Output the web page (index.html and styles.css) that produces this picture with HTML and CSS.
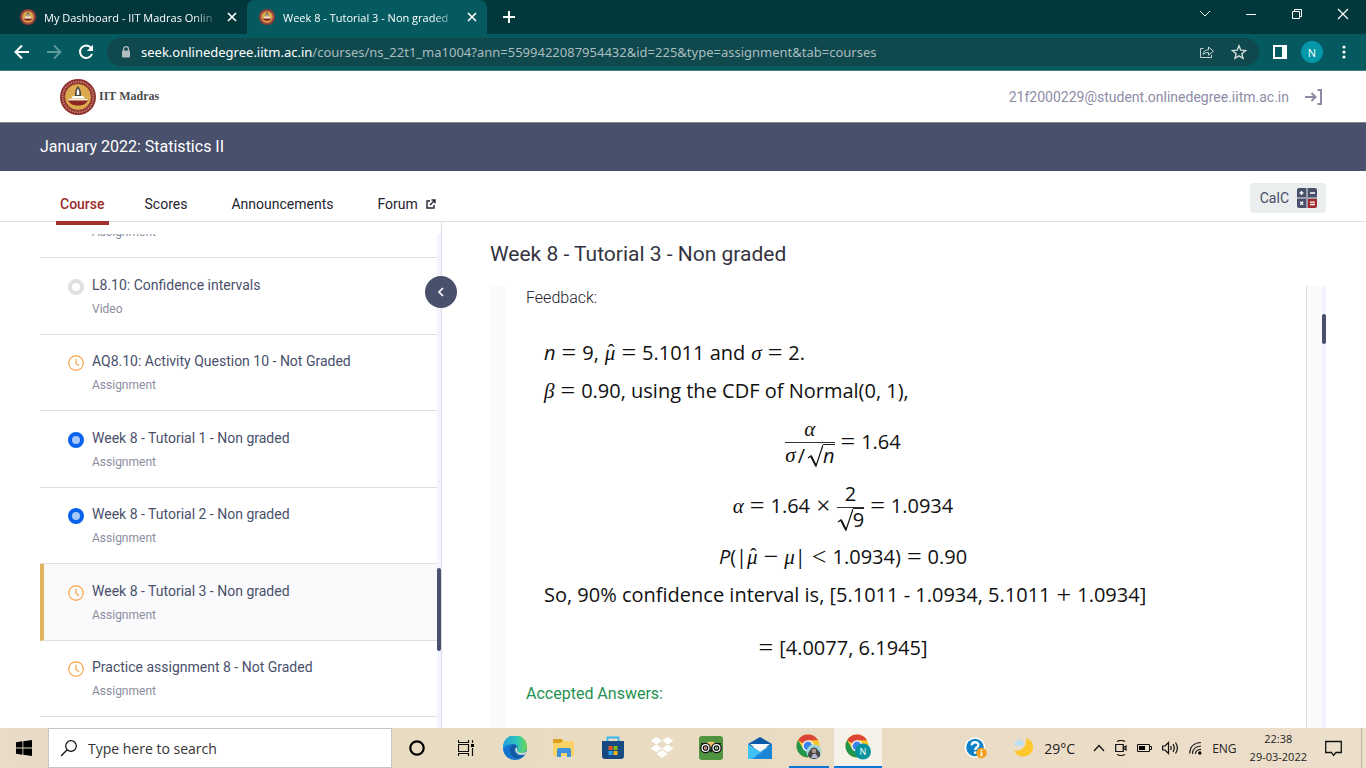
FILE: index.html
```html
<!DOCTYPE html>
<html lang="en">
<head>
<meta charset="utf-8">
<title>Week 8 - Tutorial 3 - Non graded</title>
<link rel="stylesheet" href="styles.css">
</head>
<body>
<svg class="defs" aria-hidden="true">
  <symbol id="seal" viewBox="0 0 36 36">
    <circle cx="18" cy="18" r="18" fill="#8f2f2c"/>
    <circle cx="18" cy="18" r="15.400" fill="none" stroke="#c98a80" stroke-width="1.800" stroke-dasharray="1.3 1.1"/>
    <circle cx="18" cy="18" r="13.400" fill="#dba94e" stroke="#8f2f2c" stroke-width=".8"/>
    <path d="M18 7c-2.600 3-3.400 6-3 10h6c.4-4-.4-7-3-10z" fill="#4a4742"/>
    <path d="M18 9.500c-1.200 2-1.500 4-1.200 6.500h2.400c.3-2.500 0-4.500-1.200-6.500z" fill="#fff"/>
    <path d="M11 19.500h14l-2-2.500H13z" fill="#fff"/>
    <path d="M7.500 20h21c-1.500 4.500-5 6.500-10.500 6.500S9 24.500 7.500 20z" fill="#8c2623"/>
    <path d="M7.500 20h21l-1 1.500h-19z" fill="#f5e7d0"/>
  </symbol>
  <symbol id="clock" viewBox="0 0 16 16">
    <circle cx="8" cy="8" r="7.300" fill="none" stroke="#f8ac55" stroke-width="1.400"/>
    <path d="M8 3.800V8.500L11 10.600" fill="none" stroke="#f8ac55" stroke-width="1.300"/>
  </symbol>
  <symbol id="cross" viewBox="0 0 10 10">
    <path d="M1 1l8 8M9 1L1 9" stroke="#fff" stroke-width="1.700"/>
  </symbol>
  <symbol id="chrome" viewBox="0 0 24 24">
    <circle cx="12" cy="12" r="11.500" fill="#f7c52c"/>
    <path d="M12 12L2 6.300A11.500 11.500 0 0 1 22 6.300H12z" fill="#dc4437"/>
    <path d="M2 6.300A11.500 11.500 0 0 0 11.500 23.500L16.700 14.500 12 12 7 14.500z" fill="#22954f"/>
    <circle cx="12" cy="12" r="5.700" fill="#fff"/>
    <circle cx="12" cy="12" r="4.400" fill="#3e82ee"/>
  </symbol>
  <symbol id="root" viewBox="0 0 16 24">
    <path d="M1 14l3-2 5 10L16 1" fill="none" stroke="#111" stroke-width="1.200"/>
    <path d="M4 12l5 10" stroke="#111" stroke-width="1.800"/>
  </symbol>
</svg>

<header class="browser">
  <div class="tabstrip">
    <div class="tab">
      <svg class="favicon"><use href="#seal"/></svg>
      <span class="tab-title">My Dashboard - IIT Madras Onlin</span>
      <button class="tab-close" aria-label="Close tab"><svg width="10" height="10"><use href="#cross"/></svg></button>
    </div>
    <div class="tab tab-active">
      <svg class="favicon"><use href="#seal"/></svg>
      <span class="tab-title">Week 8 - Tutorial 3 - Non graded</span>
      <button class="tab-close" aria-label="Close tab"><svg width="10" height="10"><use href="#cross"/></svg></button>
    </div>
    <button class="new-tab" aria-label="New tab"><svg width="12" height="12" viewBox="0 0 12 12"><path d="M6 0v12M0 6h12" stroke="#fff" stroke-width="2"/></svg></button>
    <div class="window-buttons">
      <button aria-label="Search tabs"><svg width="12" height="12" viewBox="0 0 12 12"><path d="M1 3l5 5 5-5" fill="none" stroke="#dfe" /></svg></button>
      <button aria-label="Minimize"><svg width="12" height="12" viewBox="0 0 12 12"><path d="M1 6.500h10" stroke="#fff"/></svg></button>
      <button aria-label="Restore"><svg width="12" height="12" viewBox="0 0 12 12"><path d="M1.500 3.500h7v7h-7zM3.500 3V1.500h7v7H9" fill="none" stroke="#fff"/></svg></button>
      <button aria-label="Close"><svg width="12" height="12" viewBox="0 0 12 12"><path d="M1 1l10 10M11 1L1 11" stroke="#fff" stroke-width="1.200"/></svg></button>
    </div>
  </div>
  <div class="toolbar">
    <div class="tool-group">
      <button class="tool" aria-label="Back"><svg width="16" height="16" viewBox="0 0 16 16"><path d="M15 8H2M8 1.500L1.500 8 8 14.500" fill="none" stroke="#fff" stroke-width="2"/></svg></button>
      <button class="tool" aria-label="Forward"><svg width="16" height="16" viewBox="0 0 16 16"><path d="M1 8h13M8 1.500L14.500 8 8 14.500" fill="none" stroke="#5f999c" stroke-width="1.800"/></svg></button>
      <button class="tool" aria-label="Reload"><svg width="16" height="16" viewBox="0 0 16 16"><path d="M13 3.800A6.200 6.200 0 1 0 14 10" fill="none" stroke="#fff" stroke-width="2"/><path d="M15 .8V7H8.800z" fill="#fff"/></svg></button>
    </div>
    <div class="omnibox">
      <svg width="10" height="12" viewBox="0 0 10 12"><rect x="1" y="4.500" width="8" height="7" rx="1" fill="#b4bec2"/><path d="M2.500 5V3.200a2.500 2.500 0 0 1 5 0V5" fill="none" stroke="#b4bec2" stroke-width="1.300"/></svg>
      <div class="url" role="textbox" aria-label="Address"><span class="url-host">seek.onlinedegree.iitm.ac.in</span>/courses/ns_22t1_ma1004?ann=5599422087954432&amp;id=225&amp;type=assignment&amp;tab=courses</div>
      <div class="tool-group">
        <button class="tool" aria-label="Share"><svg width="16" height="16" viewBox="0 0 16 16"><path d="M4.500 4.500h-3v9h11v-2.500M4 10.500c.6-3.400 2.500-4.700 5.500-4.700V3l5 4.200-5 4V8.600c-2.500 0-4 .4-5.500 1.900z" fill="none" stroke="#c4d2d3"/></svg></button>
        <button class="tool" aria-label="Bookmark"><svg width="16" height="16" viewBox="0 0 16 16"><path d="M8 1.800l1.800 4.400 4.700.4-3.600 3.100 1.100 4.600L8 11.900l-4 2.400 1.100-4.600L1.500 6.600l4.700-.4z" fill="none" stroke="#d3dddd" stroke-width="1.400"/></svg></button>
      </div>
    </div>
    <button class="tool" aria-label="Side panel"><svg width="14" height="14" viewBox="0 0 14 14"><path d="M0 0h14v14H0zM2 2v10h7V2z" fill="#fff" fill-rule="evenodd"/></svg></button>
    <button class="profile" aria-label="Profile">N</button>
    <button class="tool" aria-label="Menu"><svg width="4" height="14" viewBox="0 0 4 14" fill="#fff"><circle cx="2" cy="2" r="1.600"/><circle cx="2" cy="7" r="1.600"/><circle cx="2" cy="12" r="1.600"/></svg></button>
  </div>
</header>

<div class="site-header">
  <a class="brand" href="#"><svg class="brand-seal"><use href="#seal"/></svg>IIT Madras</a>
  <div class="account">
    <span>21f2000229@student.onlinedegree.iitm.ac.in</span>
    <button aria-label="Log out"><svg width="18" height="16" viewBox="0 0 18 16"><path d="M0 8h10M6.500 4l4 4-4 4M12.500 1H16v14h-3.500" fill="none" stroke="#8d8ca6" stroke-width="2"/></svg></button>
  </div>
</div>

<div class="course-banner">January 2022: Statistics II</div>

<nav class="course-nav">
  <a class="nav-link nav-current" href="#">Course</a>
  <a class="nav-link" href="#">Scores</a>
  <a class="nav-link" href="#">Announcements</a>
  <a class="nav-link" href="#">Forum
    <svg width="10" height="10" viewBox="0 0 10 10"><path d="M4 2H1v7h7V6M4 6l4.500-4.500M5.500 1H9v3.500" fill="none" stroke="#25242f" stroke-width="1.400"/></svg></a>
  <button class="calc">CalC
    <svg width="20" height="20" viewBox="0 0 20 20"><path d="M2 0h7v9H0V2a2 2 0 0 1 2-2zM11 0h7a2 2 0 0 1 2 2v7h-9zM0 11h9v9H2a2 2 0 0 1-2-2z" fill="#49506b"/><path d="M9 0h2v20H9zM0 9h20v2H0z" fill="#9a9dac"/><path d="M11 11h9v7a2 2 0 0 1-2 2h-7z" fill="#a32a2a"/><path d="M2.500 5h4M4.500 3v4M13 5h5M13 14.200h5M13 16.500h5M3.200 13.700l3 3M6.200 13.700l-3 3" stroke="#fff" stroke-width="1.300"/></svg>
  </button>
</nav>

<div class="workspace">
  <aside class="sidebar">
    <div class="sidebar-scroll">
      <ul class="lessons">
        <li class="lesson lesson-cut"><span class="lesson-kind">Assignment</span></li>
        <li class="lesson"><span class="status status-empty"></span><a href="#">L8.10: Confidence intervals</a><span class="lesson-kind">Video</span></li>
        <li class="lesson"><svg class="status"><use href="#clock"/></svg><a href="#">AQ8.10: Activity Question 10 - Not Graded</a><span class="lesson-kind">Assignment</span></li>
        <li class="lesson"><span class="status status-done"></span><a href="#">Week 8 - Tutorial 1 - Non graded</a><span class="lesson-kind">Assignment</span></li>
        <li class="lesson"><span class="status status-done"></span><a href="#">Week 8 - Tutorial 2 - Non graded</a><span class="lesson-kind">Assignment</span></li>
        <li class="lesson lesson-current"><svg class="status"><use href="#clock"/></svg><a href="#">Week 8 - Tutorial 3 - Non graded</a><span class="lesson-kind">Assignment</span></li>
        <li class="lesson"><svg class="status"><use href="#clock"/></svg><a href="#">Practice assignment 8 - Not Graded</a><span class="lesson-kind">Assignment</span></li>
      </ul>
      <div class="track"><div class="thumb thumb-list"></div></div>
    </div>
    <button class="collapse" aria-label="Collapse sidebar"><svg width="8" height="10" viewBox="0 0 8 10"><path d="M6 1L2 5l4 4" fill="none" stroke="#fff" stroke-width="1.700"/></svg></button>
  </aside>

  <main class="content">
    <h1>Week 8 - Tutorial 3 - Non graded</h1>
    <div class="sheet-frame">
      <div class="sheet">
        <p class="label">Feedback:</p>
        <div class="solution">
          <p class="line"><i>n</i><b>=</b><span>9,</span><span><span class="hat"><em>μ</em></span></span><b>=</b><span>5.1011 and</span><em>σ</em><b>=</b><span>2.</span></p>
          <p class="line"><em>β</em><b>=</b><span>0.90, using the CDF of Normal(0, 1),</span></p>
          <p class="line centered tall">
            <span class="frac"><span class="num"><em>α</em></span><span class="den"><em>σ</em><span class="slash">/</span><svg class="root"><use href="#root"/></svg><span class="radicand"><i>n</i></span></span></span><b>=</b><span>1.64</span></p>
          <p class="line centered tall"><em>α</em><b>=</b><span>1.64</span><b>×</b>
            <span class="frac"><span class="num">2</span><span class="den"><svg class="root"><use href="#root"/></svg><span class="radicand">9</span></span></span><b>=</b><span>1.0934</span></p>
          <p class="line centered"><span><i>P</i>(|<span class="hat"><em>μ</em></span></span><b>−</b><span><em>μ</em>|</span><b>&lt;</b><span>1.0934)</span><b>=</b><span>0.90</span></p>
          <p class="line"><span>So, 90% confidence interval is, [5.1011 - 1.0934, 5.1011</span><b>+</b><span>1.0934]</span></p>
          <p class="line centered result"><b>=</b><span>[4.0077, 6.1945]</span></p>
        </div>
        <p class="label accepted">Accepted Answers:</p>
      </div>
      <div class="track"><div class="thumb thumb-sheet"></div></div>
    </div>
  </main>
</div>

<footer class="taskbar">
  <button class="task start" aria-label="Start"><svg width="16" height="16" viewBox="0 0 16 16"><path d="M0 2.200L6.500 1.300v6.200H0zM7.300 1.200L16 0v7.500H7.300zM0 8.400h6.500v6.300L0 13.800zM7.300 8.400H16V16l-8.700-1.200z"/></svg></button>
  <label class="search"><svg width="18" height="18" viewBox="0 0 18 18"><circle cx="11" cy="7" r="5.300" fill="none" stroke="#111" stroke-width="1.200"/><path d="M7.200 10.800L1 17" stroke="#111" stroke-width="1.300"/></svg><input type="text" placeholder="Type here to search" aria-label="Search"></label>
  <button class="task" aria-label="Cortana"><svg width="16" height="16" viewBox="0 0 16 16"><circle cx="8" cy="8" r="6.700" fill="none" stroke="#000" stroke-width="2.200"/></svg></button>
  <button class="task" aria-label="Task view"><svg width="16" height="16" viewBox="0 0 16 16"><path d="M.5 0v2.500h10V0M.5 16v-2.500h10V16M.5 4.500h10v7H.5zM14.500 0v3M14.500 8v8" fill="none" stroke="#111" stroke-width="1.200"/><path d="M13 4h3v3h-3z"/></svg></button>
  <button class="task" aria-label="Edge"><svg width="24" height="24" viewBox="0 0 24 24"><defs><linearGradient id="edge-top"><stop offset="0" stop-color="#249ee2"/><stop offset=".6" stop-color="#31c7b6"/><stop offset="1" stop-color="#6cd84d"/></linearGradient></defs><circle cx="12" cy="12" r="12" fill="#1477cf"/><path d="M0 11A12 12 0 0 1 24 11c0 4-3 6-6.500 6-3 0-4-1.300-3-3 1.400-2.500-.5-6-4.500-6C6 8 2 9.500 0 13z" fill="url(#edge-top)"/><path d="M10 8.500c-4 2-4.500 9 .5 12.500 3.500 2.200 8 1.500 11-2-4 1.800-10 .5-10-5 0-2 1-2.800 2-3.500-1-1.300-2-2-3.500-2z" fill="#1558a5"/><path d="M13.800 11c-1.500 1-2 3-.8 5 2 3 6 3.500 9 2.200l1.800-3c-3 2.300-8 2.300-9.300.3-.8-1.500.3-2.500-.7-4.500z" fill="#e9dfc6"/></svg></button>
  <button class="task" aria-label="File Explorer"><svg width="22" height="20" viewBox="0 0 22 20"><path d="M0 1h9l2 2h10v15H0z" fill="#f9d368"/><path d="M0 1h9l1 2-2 2H0z" fill="#dda020"/><path d="M4 19v-7q0-2 2-2h10q2 0 2 2v7h-4v-4H8v4z" fill="#3e91dd"/></svg></button>
  <button class="task" aria-label="Store"><svg width="24" height="24" viewBox="0 0 24 24"><path d="M6.500 6V1.500h11V6" fill="none" stroke="#36b6ee" stroke-width="1.800"/><path d="M1 5h22v15a3 3 0 0 1-3 3H4a3 3 0 0 1-3-3z" fill="#174a82"/><path d="M7.500 10h4v4h-4z" fill="#ef5323"/><path d="M12.500 10h4v4h-4z" fill="#7fba00"/><path d="M7.500 15h4v4h-4z" fill="#22a6ee"/><path d="M12.500 15h4v4h-4z" fill="#fbb910"/></svg></button>
  <button class="task" aria-label="Dropbox"><svg width="24" height="24" viewBox="0 0 24 24" fill="#fff"><path d="M6.500 1L12 4.800 6.500 8.600.5 4.800zM17.500 1l6 3.800-6 3.800L12 4.800zM.5 12.500l6-3.900 5.500 3.900-5.500 3.800zM17.500 8.600l6 3.900-6 3.800-5.500-3.800zM6.500 17.800L12 14l5.500 3.800L12 22z"/></svg></button>
  <button class="task" aria-label="Tripadvisor"><svg width="24" height="24" viewBox="0 0 24 24"><rect width="24" height="24" rx="3" fill="#519440"/><path d="M2 7h20l-2 4H4z" fill="#111"/><path d="M7 7q5-3 10 0l-5 5z" fill="#ecc36a"/><g fill="#fff" stroke="#111" stroke-width="1.300"><circle cx="6.500" cy="12" r="4.700"/><circle cx="17.500" cy="12" r="4.700"/><circle cx="6.500" cy="12" r="2.200"/><circle cx="17.500" cy="12" r="2.200"/></g><path d="M10.500 14h3L12 17z" fill="#111"/><circle cx="6.500" cy="12" r="1" fill="#c33"/><circle cx="17.500" cy="12" r="1" fill="#393"/></svg></button>
  <button class="task" aria-label="Mail"><svg width="24" height="22" viewBox="0 0 24 22"><path d="M0 7l12-7 12 7v3H0z" fill="#0c59a8"/><path d="M2 7h20l-10 8z" fill="#f8f8f8"/><path d="M0 7l12 8 12-8v15H0z" fill="#2ea9ea"/><path d="M24 7v15H5z" fill="#1c86d6"/><path d="M0 7l12 8-8 7H0z" fill="#40c1f4"/></svg></button>
  <button class="task running" aria-label="Chrome, first profile"><svg width="26" height="26" viewBox="0 0 26 26"><use href="#chrome" width="24" height="24"/><circle cx="18" cy="18" r="7.500" fill="#9ed5d9"/><path d="M12 22c0-3 1-5 2.500-6 .5-3 6-3.500 7 0 2 1 3 3 2.500 6-3 4-9 4-12 0z" fill="#4b4648"/><circle cx="18" cy="17" r="2.200" fill="#b59a91"/><path d="M15 24l2-4h3l2 4z" fill="#b6b8cf"/></svg></button>
  <button class="task running focused" aria-label="Chrome, N"><svg width="26" height="26" viewBox="0 0 26 26"><use href="#chrome" width="24" height="24"/><circle cx="18" cy="17.500" r="8" fill="#04939e"/><text x="18" y="21" text-anchor="middle" class="badge-letter">N</text></svg></button>
  <div class="tray">
    <button aria-label="Help"><svg width="24" height="22" viewBox="0 0 24 22"><circle cx="11" cy="10.500" r="10.300" fill="#fff"/><circle cx="11" cy="10.500" r="8.700" fill="#0d83c6"/><path d="M7.800 8.300c0-4 6.600-4 6.600-.4 0 2.300-3.200 2.400-3.200 5" fill="none" stroke="#fff" stroke-width="2.300"/><circle cx="11.200" cy="15.700" r="1.400" fill="#fff"/><circle cx="17.500" cy="16" r="5.300" fill="#f3a01f"/><path d="M17.500 12.800v1.500M17.500 15.300v4" stroke="#fff" stroke-width="1.600"/></svg></button>
    <button class="weather"><svg width="20" height="20" viewBox="0 0 20 20"><path d="M12 0c10 3 9 16 0 18C6 20 1 16 .5 12.500 8 14 13.500 8 12 0z" fill="#fdc82b"/><path d="M2 7.500c-3-1-1-4 .5-3.700C3.500.5 7.500 1 8 3.800c3 .5 2.500 3.700 0 3.700z" fill="#b8e0f5"/></svg>29°C</button>
    <button aria-label="Hidden icons"><svg width="12" height="8" viewBox="0 0 12 8"><path d="M1 7l5-5.500L11 7" fill="none" stroke="#111" stroke-width="1.300"/></svg></button>
    <button aria-label="Meet now"><svg width="12" height="16" viewBox="0 0 12 16"><path d="M2 1.500q4-2 8 0M2 14.500q4 2 8 0M.7 4.500h7.500v7H.7zM8.500 7.500l2.500-1.500v4l-2.500-1.500z" fill="none" stroke="#111" stroke-width="1.200"/></svg></button>
    <button aria-label="Battery"><svg width="15" height="10" viewBox="0 0 15 10"><path d="M.5 1.500h12v7H.5zM13 3.500h1.500v3H13" fill="none" stroke="#111"/><path d="M2 3h6v4H2z"/></svg></button>
    <button aria-label="Volume"><svg width="17" height="14" viewBox="0 0 17 14"><path d="M.6 5h2.400l3.500-3.500v11L3 9H.6zM8.500 5q1.400 2 0 4M11 3.200q2.500 3.800 0 7.600M13.500 1.500q3.800 5.500 0 11" fill="none" stroke="#111" stroke-width="1.200"/></svg></button>
    <button aria-label="Network"><svg width="13" height="14" viewBox="0 0 13 14"><path d="M.7 12.500Q1 2 12 1.500M3.500 13Q3.500 5.500 12 5M6.500 13Q6.500 8.500 12 8.300" fill="none" stroke="#222" stroke-width="1.200"/><circle cx="10.800" cy="12" r="1.700"/></svg></button>
    <button>ENG</button>
    <button class="time">22:38<br>29-03-2022</button>
    <button aria-label="Notifications"><svg width="17" height="17" viewBox="0 0 17 17"><path d="M.7 1.500h15.600v11H11L8.500 15.500 6.500 12.500H.7z" fill="none" stroke="#111" stroke-width="1.300"/></svg></button>
  </div>
</footer>
</body>
</html>
```
FILE: styles.css
```css
* { box-sizing: border-box; }

body {
  margin: 0;
  height: 100vh;
  display: flex;
  flex-direction: column;
  overflow: hidden;
  background: #fff;
  color: #25242f;
  font-family: Roboto, "Liberation Sans", sans-serif;
  font-size: 14px;
}

button {
  border: 0;
  padding: 0;
  background: none;
  color: inherit;
  font: inherit;
  display: flex;
  align-items: center;
  justify-content: center;
}

a { color: inherit; text-decoration: none; }
p, h1, ul { margin: 0; padding: 0; }
svg { display: block; flex: none; }
.defs { position: absolute; width: 0; height: 0; }

/* Browser frame */
.browser {
  background: #045a5f;
  border-bottom: 1px solid #437f84;
  font-family: "Open Sans", "Noto Sans", sans-serif;
  color: #fff;
}

.tabstrip {
  display: flex;
  height: 34px;
  background: #02373c;
}

.tab {
  display: flex;
  align-items: center;
  gap: 8px;
  width: 240px;
  padding: 0 10px 0 13px;
  font-size: 11px;
}

.tab:first-child { margin-left: 7px; }
.tab-active { padding-left: 12px; background: #045a5f; border-radius: 8px 8px 0 0; }
.favicon { width: 16px; height: 16px; }

.tab-title {
  flex: 1;
  white-space: nowrap;
  mask-image: linear-gradient(to right, #000 85%, transparent);
}

.new-tab { width: 44px; }
.window-buttons { display: flex; margin-left: auto; }
.window-buttons button { width: 46px; padding-bottom: 6px; }

.toolbar {
  display: flex;
  align-items: center;
  gap: 13px;
  height: 36px;
  padding: 0 14px;
}

.tool { min-width: 16px; }
.tool-group { display: flex; gap: 16px; }

.omnibox {
  flex: 1;
  display: flex;
  align-items: center;
  gap: 10px;
  height: 28px;
  padding: 0 12px 0 14px;
  border-radius: 14px;
  background: #0f484d;
}

.url {
  flex: 1;
  font-family: "Noto Sans", "Open Sans", sans-serif;
  font-size: 13px;
  color: #a9bdbf;
  white-space: nowrap;
}

.url-host { color: #fff; }

.profile {
  width: 22px;
  height: 22px;
  border-radius: 50%;
  background: #0497a7;
  font-size: 11px;
}

/* Site header */
.site-header {
  display: flex;
  align-items: center;
  justify-content: space-between;
  height: 52px;
  padding: 0 43px 0 60px;
  border-bottom: 1px solid #85877e;
}

.brand {
  display: flex;
  align-items: center;
  gap: 3px;
  color: #4c4c4c;
  font: bold 12px "Liberation Serif", serif;
}

.brand-seal { width: 36px; height: 36px; }

.account {
  display: flex;
  align-items: center;
  gap: 16px;
  color: #8d8ca6;
}

.course-banner {
  padding: 0 40px;
  background: #49506b;
  color: #fff;
  font-size: 16px;
  line-height: 48px;
}

.course-nav {
  display: flex;
  align-items: flex-end;
  gap: 28px;
  height: 51px;
  padding: 0 40px 0 56px;
  border-bottom: 1px solid #e0e0e0;
}

.nav-link {
  display: flex;
  align-items: center;
  gap: 8px;
  padding: 0 8px;
  height: 34px;
}

.nav-current {
  z-index: 1;
  height: 38px;
  margin-bottom: -4px;
  padding: 0 4px;
  border-bottom: 4px solid #a32f2e;
  color: #9b2c2b;
  font-weight: 500;
}

.calc {
  gap: 8px;
  height: 30px;
  margin: 0 0 8px auto;
  padding: 0 9px 0 10px;
  border-radius: 4px;
  background: #eaeeee;
  color: #49506b;
}

/* Workspace */
.workspace { flex: 1; min-height: 0; display: flex; }

.sidebar {
  position: relative;
  width: 442px;
  padding: 12px 0 0 40px;
  border-right: 1px solid #dcdde4;
}

.sidebar-scroll { display: flex; height: 100%; overflow: hidden; }

.lessons {
  flex: 1;
  display: grid;
  grid-template-rows: 24px repeat(6, 1fr);
  padding-bottom: 11px;
  list-style: none;
}

.lesson {
  display: grid;
  grid-template-columns: 16px 1fr;
  grid-template-rows: 20px 16px;
  align-content: center;
  gap: 6px 8px;
  padding-left: 28px;
  border-bottom: 1px solid #e0e0e0;
  color: #49506b;
  line-height: 20px;
}

.lesson-current {
  padding-left: 24px;
  border-left: 4px solid #e2b35f;
  background: #fafafc;
}

.lesson-cut {
  grid-template-rows: 16px;
  align-content: end;
  padding-bottom: 17px;
  overflow: hidden;
}

.lesson-kind {
  grid-column: 2;
  color: #8d8ca0;
  font-size: 12px;
  line-height: 16px;
}

.status { width: 16px; height: 16px; align-self: end; border-radius: 50%; }
.status-empty { border: 4px solid #e0e0e0; }
.status-done { border: 4px solid #0962ea; background: #a8c8fa; }

.track { width: 4px; background: #f2f4ff; }
.thumb { border-radius: 2px; background: #49506b; }
.thumb-list { height: 83px; margin-top: 334px; }
.thumb-sheet { height: 30px; margin-top: 28px; }

.collapse {
  position: absolute;
  top: 54px;
  right: -16px;
  width: 32px;
  height: 32px;
  border-radius: 50%;
  background: #49506b;
}

.content {
  flex: 1;
  display: flex;
  flex-direction: column;
  min-width: 0;
  padding: 0 40px 0 48px;
}

h1 {
  font-size: 21px;
  font-weight: 400;
  line-height: 64px;
  color: #34333f;
}

.sheet-frame {
  flex: 1;
  min-height: 0;
  display: flex;
  background: #fafafd;
}

.sheet {
  flex: 1;
  margin: 0 15px 0 16px;
  padding-left: 20px;
  border-right: 1px solid #e0e0e0;
  background: #fff;
  overflow: hidden;
}

.label { font-size: 16px; font-weight: 300; line-height: 24px; }
.accepted { color: #1e9150; font-weight: 400; }

/* Worked solution */
.solution {
  width: 598px;
  margin-left: 18px;
  padding-top: 24px;
  color: #111;
  font-family: "Open Sans", "Noto Sans", sans-serif;
  font-size: 20px;
  line-height: 38px;
  white-space: nowrap;
}

.line {
  display: flex;
  align-items: center;
  gap: 6px;
  height: 38px;
}

.line em { font: italic 21px "Liberation Serif", serif; }
.line b { font: 26px "Liberation Serif", serif; }
.centered { justify-content: center; }
.tall { height: 64px; }
.result { height: 68px; }

.frac { display: flex; flex-direction: column; line-height: 26px; }
.num { border-bottom: 1px solid #333; text-align: center; }
.den { display: flex; align-items: center; justify-content: center; }
.slash { padding: 0 2px; }
.root { width: 16px; height: 24px; }
.radicand { border-top: 1px solid #222; line-height: 22px; }

.hat { position: relative; }
.hat::before {
  content: "ˆ";
  position: absolute;
  left: 3px;
  top: 3px;
  font: 20px/20px "Liberation Serif", serif;
}

/* Taskbar */
.taskbar {
  display: flex;
  height: 40px;
  background: linear-gradient(to right, #e9dbc7, #e8dcc2 40%, #eadbc5 65%, #ecdfcb);
  color: #222;
  font-family: "Open Sans", "Noto Sans", sans-serif;
  font-size: 12px;
}

.task { width: 49px; }
.start { width: 48px; }

.search {
  display: flex;
  align-items: center;
  gap: 8px;
  width: 344px;
  padding-left: 11px;
  border: 1px solid #c6c6c6;
  background: #fff;
}

.search input {
  flex: 1;
  border: 0;
  outline: 0;
  background: none;
  font: 14px "Open Sans", "Noto Sans", sans-serif;
}

.search input::placeholder { color: #333; }
.running { border-bottom: 2px solid #0a76d5; width: 40px; margin: 0 5px; }
.focused { background: #f7f2e9; width: 48px; margin: 0; }
.badge-letter { fill: #fff; font-size: 9px; }

.tray {
  display: flex;
  align-items: center;
  gap: 10px;
  margin: 0 4px 0 auto;
  padding-right: 19px;
  border-right: 1px solid #bdb3a2;
}

.weather { gap: 10px; margin: 0 8px 0 16px; font-size: 14px; }
.time { margin: 0 8px 0 3px; font-size: 11px; line-height: 18px; }
```
